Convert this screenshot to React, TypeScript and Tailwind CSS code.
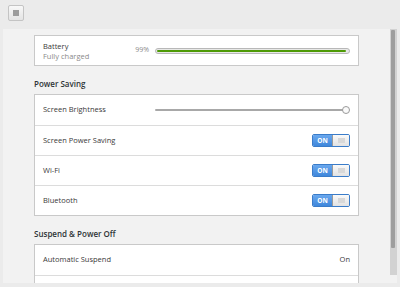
const font = { fontFamily: '"Open Sans", "Noto Sans", sans-serif' };

function Switch() {
  return (
    <div className="flex h-[13px] w-[38px] rounded-[2px] border border-[#3a7cc9] overflow-hidden">
      <div className="flex w-[19px] items-center justify-center bg-gradient-to-b from-[#6aa8ee] to-[#3f87db] text-[6.5px] font-bold text-white">
        ON
      </div>
      <div className="flex flex-1 items-center justify-center bg-gradient-to-b from-[#fafafa] to-[#e2e2e2] border-l border-[#9a9a9a]">
        <div className="h-[5px] w-[7px] bg-[#d8d8d8]" />
      </div>
    </div>
  );
}

function Row({ label, children, first }: { label?: string; children?: React.ReactNode; first?: boolean }) {
  return (
    <div className={`flex h-[30px] items-center justify-between px-[8px] ${first ? "" : "border-t border-[#dcdcdc]"}`}>
      <span className="text-[7.5px] text-[#3a3a3a]">{label}</span>
      {children}
    </div>
  );
}

function Heading({ children }: { children: React.ReactNode }) {
  return <div className="mt-[13px] mb-[5px] h-[10px] text-[8px] font-semibold leading-[10px] text-[#2e3436]">{children}</div>;
}

export default function App() {
  return (
    <div className="flex h-[287px] w-[400px] flex-col overflow-hidden bg-[#ebebeb]" style={font}>
      <div className="flex h-[29px] shrink-0 items-start pl-[8px] pt-[5px]">
        <button className="flex h-[16px] w-[16px] items-center justify-center rounded-[2px] border border-[#c4c4c4] bg-gradient-to-b from-[#f8f8f8] to-[#e4e4e4]">
          <span className="h-[6px] w-[6px] bg-[#9c9c9c]" />
        </button>
      </div>
      <div className="mx-[3px] flex h-[254px] shrink-0 overflow-hidden bg-[#f2f2f2]">
        <div className="flex-1 overflow-hidden px-[31px] pt-[6px]">
          <div className="flex h-[31px] items-center justify-between border border-[#c9c9c9] bg-white px-[8px]">
            <div className="flex flex-col leading-[10px]">
              <span className="text-[7.5px] text-[#3a3a3a]">Battery</span>
              <span className="text-[7.5px] text-[#8a8a8a]">Fully charged</span>
            </div>
            <div className="flex items-center gap-[6px]">
              <span className="text-[7px] text-[#8a8a8a]">99%</span>
              <div className="h-[6px] w-[195px] rounded-full border border-[#b8b8b8] bg-[#e8e8e8] p-[1px]">
                <div className="h-full w-[99%] rounded-full bg-[#4e9a06]" />
              </div>
            </div>
          </div>

          <Heading>Power Saving</Heading>
          <div className="border border-[#c9c9c9] bg-white">
            <Row label="Screen Brightness" first>
              <div className="relative mr-[3px] h-[2px] w-[192px] rounded bg-[#a8a8a8]">
                <div className="absolute -right-[3px] -top-[3px] h-[8px] w-[8px] rounded-full border border-[#9a9a9a] bg-[#fafafa]" />
              </div>
            </Row>
            <Row label="Screen Power Saving">
              <Switch />
            </Row>
            <Row label="Wi-Fi">
              <Switch />
            </Row>
            <Row label="Bluetooth">
              <Switch />
            </Row>
          </div>

          <Heading>Suspend &amp; Power Off</Heading>
          <div className="border border-[#c9c9c9] bg-white">
            <Row label="Automatic Suspend" first>
              <span className="text-[7.5px] text-[#3a3a3a]">On</span>
            </Row>
            <Row>
              <div className="mt-[14px] h-[16px] w-[49px] rounded-[2px] border border-[#c4c4c4] bg-[#f6f6f6]" />
            </Row>
          </div>
        </div>
        <div className="flex w-[7px] flex-col">
          <div className="h-[246px] bg-[#d2d2d2] px-[1px] pt-[1px]">
            <div className="h-[218px] w-[4px] rounded-[1px] bg-[#9e9e9e]" />
          </div>
        </div>
      </div>
    </div>
  );
}
